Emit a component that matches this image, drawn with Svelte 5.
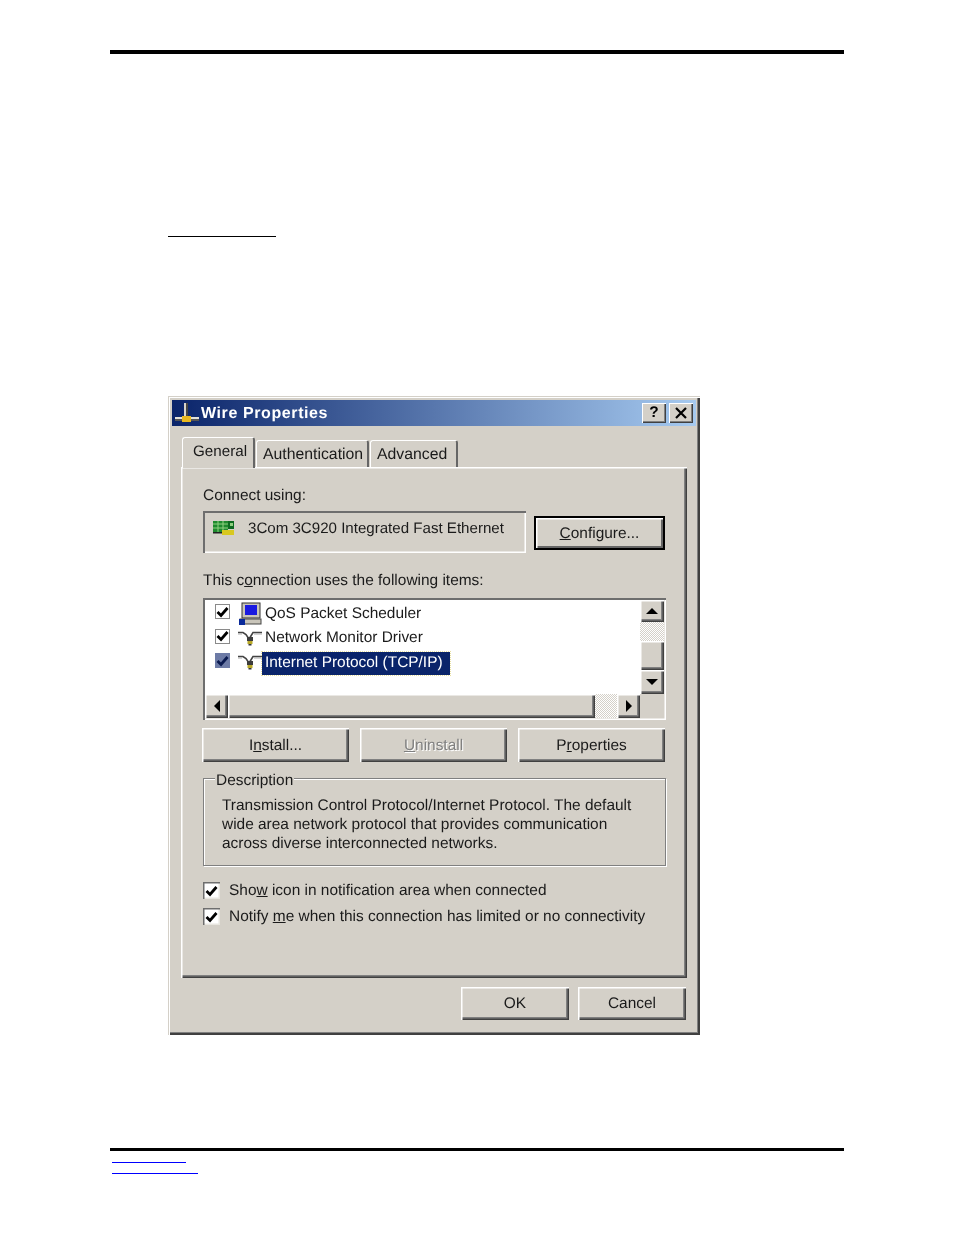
<script>
  const items = [
    { name: 'QoS Packet Scheduler', icon: 'pc' },
    { name: 'Network Monitor Driver', icon: 'net' },
    { name: 'Internet Protocol (TCP/IP)', icon: 'net', selected: true }
  ]
</script>

{#snippet netIcon()}
  <svg class="item-icon" width="24" height="20" viewBox="0 0 24 20">
    <path d="M0 3.5h5l3 2 2 3M24 3.5h-9l-3 5" fill="none" stroke="#444" stroke-width="1.6" />
    <path d="M0 5h4M16 5h8" stroke="#aaa" stroke-width="1" />
    <rect x="9" y="8" width="6" height="4" fill="#3c3c3c" />
    <rect x="9.5" y="12" width="5" height="3" fill="#b8a828" />
    <rect x="10.5" y="15" width="3" height="1.5" fill="#333" />
  </svg>
{/snippet}

{#snippet tick(color)}
  <svg width="13" height="12" viewBox="0 0 13 12"><path d="M1.5 6l3.5 3.5 6.5-7.5" fill="none" stroke={color} stroke-width="2.8" /></svg>
{/snippet}

<div class="page">
  <div class="rule top"></div>
  <div class="short-line"></div>

  <div class="dialog">
    <div class="title">
      <svg width="26" height="22" viewBox="0 0 26 22">
        <rect x="10" y="1" width="2" height="15" fill="#d8d4ca" />
        <rect x="12" y="1" width="2" height="15" fill="#444" />
        <rect x="1" y="15" width="24" height="2" fill="#e4e2da" />
        <rect x="1" y="17" width="24" height="2" fill="#555" />
        <rect x="8" y="14" width="9" height="6" fill="#e8b820" />
      </svg>
      <span class="title-text">Wire Properties</span>
      <span class="caption-btns">
        <span class="caption-btn help">?</span>
        <span class="caption-btn">
          <svg width="14" height="12" viewBox="0 0 14 12"><path d="M2 1l10 10M12 1L2 11" stroke="#000" stroke-width="2.2" /></svg>
        </span>
      </span>
    </div>

    <div class="tabs">
      <div class="tab active">General</div>
      <div class="tab auth">Authentication</div>
      <div class="tab adv">Advanced</div>
    </div>

    <div class="panel">
      <div class="label">Connect using:</div>
      <div class="connect-row">
        <div class="adapter">
          <svg width="24" height="17" viewBox="0 0 24 17">
            <rect x="1" y="1" width="15" height="11" fill="#1f8a2e" />
            <path d="M1 4h15M1 8h15M6 1v11M11 1v11" stroke="#8fd080" stroke-width="1" />
            <rect x="16" y="1" width="6" height="8" fill="#0c6a20" />
            <rect x="18" y="3" width="3" height="3" fill="#8fd080" />
            <rect x="10" y="10" width="12" height="5" fill="#d8c820" />
            <rect x="1" y="12" width="9" height="1.5" fill="#222" />
          </svg>
          <span>3Com 3C920 Integrated Fast Ethernet</span>
        </div>
        <div class="btn default"><span><u>C</u>onfigure...</span></div>
      </div>

      <div class="label second">This c<u>o</u>nnection uses the following items:</div>
      <div class="listbox">
        <div class="list-top">
          <div class="rows">
            {#each items as item}
              <div class="row">
                <span class="check" class:dim={item.selected}>
                  {@render tick(item.selected ? '#0a1a50' : '#000')}
                </span>
                {#if item.icon === 'pc'}
                  <svg class="item-icon" width="24" height="24" viewBox="0 0 24 24">
                    <rect x="4" y="1" width="18" height="15" fill="#c9c5ba" stroke="#333" />
                    <rect x="7" y="3" width="12" height="10" fill="#1a1ae0" />
                    <rect x="2" y="17" width="21" height="5" fill="#c9c5ba" stroke="#444" />
                    <rect x="1" y="17" width="6" height="6" fill="#0a2a9a" />
                  </svg>
                {:else}
                  {@render netIcon()}
                {/if}
                <span class="item-name" class:selected={item.selected}>{item.name}</span>
              </div>
            {/each}
          </div>
          <div class="vscroll">
            <div class="sb-btn up"><i class="arrow a-up"></i></div>
            <div class="pattern v"></div>
            <div class="sb-btn thumb-v"></div>
            <div class="sb-btn down"><i class="arrow a-down"></i></div>
          </div>
        </div>
        <div class="hscroll">
          <div class="sb-btn left"><i class="arrow a-left"></i></div>
          <div class="sb-btn thumb-h"></div>
          <div class="pattern h"></div>
          <div class="sb-btn right"><i class="arrow a-right"></i></div>
          <div class="corner"></div>
        </div>
      </div>

      <div class="action-row">
        <div class="btn action">I<u>n</u>stall...</div>
        <div class="btn action disabled"><u>U</u>ninstall</div>
        <div class="btn action">P<u>r</u>operties</div>
      </div>

      <div class="group">
        <span class="legend">Description</span>
        <p>Transmission Control Protocol/Internet Protocol. The default<br />wide area network protocol that provides communication<br />across diverse interconnected networks.</p>
      </div>

      <div class="opt first">
        <span class="check box">{@render tick('#000')}</span>
        <span>Sho<u>w</u> icon in notification area when connected</span>
      </div>
      <div class="opt">
        <span class="check box">{@render tick('#000')}</span>
        <span>Notify <u>m</u>e when this connection has limited or no connectivity</span>
      </div>
    </div>

    <div class="footer">
      <div class="btn foot">OK</div>
      <div class="btn foot">Cancel</div>
    </div>
  </div>

  <div class="rule bottom"></div>
  <div class="blue one"></div>
  <div class="blue two"></div>
</div>

<style>
  :global(body) {
    background: #fff;
  }

  .page {
    width: 954px;
    height: 1235px;
    box-sizing: border-box;
    padding: 50px 110px 0;
    overflow: hidden;
  }

  .rule {
    height: 4px;
    background: #000;
  }

  .rule.bottom {
    height: 3px;
    margin-top: 113px;
  }

  .short-line {
    width: 108px;
    height: 1px;
    background: #000;
    margin: 182px 0 0 58px;
  }

  .blue {
    height: 1px;
    background: #0000ff;
    margin-left: 2px;
  }

  .blue.one {
    width: 74px;
    margin-top: 11px;
  }

  .blue.two {
    width: 86px;
    margin-top: 10px;
  }

  .dialog {
    width: 532px;
    height: 639px;
    box-sizing: border-box;
    margin: 159px 0 0 58px;
    padding: 4px 4px 0;
    background: #d4d0c8;
    box-shadow: inset 1px 1px 0 #d4d0c8, inset 2px 2px 0 #fff, inset -2px -2px 0 #404040, inset -3px -3px 0 #808080;
    font: 15.45px "Liberation Sans", Arial, sans-serif;
    text-rendering: geometricPrecision;
    color: #1a1a1a;
    filter: blur(0.4px);
  }

  .title {
    height: 26px;
    display: flex;
    align-items: center;
    padding: 0 3px 0 2px;
    background: linear-gradient(90deg, #0a246a, #a6caf0);
    color: #fff;
  }

  .title-text {
    font-weight: bold;
    font-size: 16px;
    margin: 1px 0 0 1px;
    letter-spacing: 0.6px;
  }

  .caption-btns {
    margin-left: auto;
    display: flex;
    gap: 3px;
  }

  .caption-btn {
    width: 24px;
    height: 20px;
    display: flex;
    align-items: center;
    justify-content: center;
    background: #d4d0c8;
    color: #000;
    font-weight: bold;
    box-shadow: inset 1px 1px 0 #fff, inset -1px -1px 0 #404040, inset -2px -2px 0 #808080;
  }

  .tabs {
    display: flex;
    align-items: flex-end;
    height: 41px;
    padding-left: 10px;
    position: relative;
    z-index: 1;
  }

  .tab {
    height: 27px;
    box-sizing: border-box;
    padding: 5px 7px 0 6px;
    white-space: nowrap;
    font-size: 15.8px;
    border-top: 1.5px solid #fff;
    border-left: 1.5px solid #fff;
    border-right: 2px solid #666;
    border-radius: 3px 3px 0 0;
  }

  .tab.active {
    height: 31px;
    margin-bottom: -1px;
    padding: 5px 6px 0 10px;
    width: 73px;
    font-size: 15.2px;
    background: #d4d0c8;
  }

  .tab.auth {
    width: 113px;
    margin-left: 1px;
  }

  .tab.adv {
    width: 88px;
    margin-left: 1px;
  }

  .panel {
    height: 511px;
    box-sizing: border-box;
    margin: 0 9px 0 9px;
    padding: 19px 21px 0 22px;
    box-shadow: inset 1.5px 1.5px 0 #fff, inset -1.5px -1.5px 0 #404040, inset -3px -3px 0 #808080;
  }

  .label {
    line-height: 20px;
  }

  .label.second {
    margin-top: 18px;
  }

  .connect-row {
    display: flex;
    align-items: center;
    margin-top: 5px;
    height: 42px;
  }

  .adapter {
    width: 323px;
    height: 42px;
    box-sizing: border-box;
    display: flex;
    align-items: center;
    gap: 12px;
    padding: 0 0 8px 9px;
    white-space: nowrap;
    font-size: 15.1px;
    box-shadow: inset 2px 2px 0 #6e6e6e, inset -1.5px -1.5px 0 #fff;
  }

  .btn {
    box-sizing: border-box;
    display: flex;
    align-items: center;
    justify-content: center;
    padding-top: 1px;
    background: #d4d0c8;
    box-shadow: inset 1.5px 1.5px 0 #fff, inset -1.5px -1.5px 0 #404040, inset -3px -3px 0 #808080;
  }

  .btn.default {
    width: 131px;
    height: 34px;
    margin: 2px 0 0 8px;
    border: 2px solid #000;
    box-shadow: inset 1.5px 1.5px 0 #fff, inset -2px -2px 0 #666;
  }

  .listbox {
    margin-top: 7px;
    height: 122px;
    width: 463px;
    box-sizing: border-box;
    display: flex;
    flex-direction: column;
    padding: 2px 2px 2px 2px;
    box-shadow: inset 2px 2px 0 #6e6e6e, inset -1.5px -1.5px 0 #fff;
  }

  .list-top {
    display: flex;
    height: 94px;
  }

  .rows {
    flex: 1;
    background: #fff;
    padding-top: 2px;
  }

  .row {
    display: flex;
    align-items: center;
    height: 24.5px;
    padding-left: 10px;
  }

  .check {
    width: 15px;
    height: 15px;
    box-sizing: border-box;
    display: flex;
    align-items: center;
    justify-content: center;
    border: 1.5px solid #8a8a8a;
    background: #fff;
    flex: none;
    margin-top: -5px;
  }

  .check.dim {
    background: #6d7ba6;
    border-color: #6d7ba6;
  }

  .item-icon {
    margin-left: 8px;
    flex: none;
  }

  .item-name {
    white-space: nowrap;
    margin-left: 1px;
    height: 23px;
    line-height: 22px;
    padding: 0 6px 0 2px;
    box-sizing: border-box;
  }

  .item-name.selected {
    margin-left: 0;
    padding: 0 7px 0 3px;
    background: #0a246a;
    color: #fff;
    outline: 1px dotted #e8e0a0;
  }

  .vscroll {
    width: 24px;
    display: flex;
    flex-direction: column;
    flex: none;
  }

  .sb-btn {
    background: #d4d0c8;
    display: flex;
    align-items: center;
    justify-content: center;
    flex: none;
    box-shadow: inset 1.5px 1.5px 0 #fff, inset -1.5px -1.5px 0 #404040, inset -3px -3px 0 #808080;
  }

  .sb-btn.up {
    height: 22px;
  }

  .pattern {
    background: repeating-conic-gradient(#d4d0c8 0 25%, #fff 0 50%) 0 0 / 2px 2px;
  }

  .pattern.v {
    height: 19px;
  }

  .sb-btn.thumb-v {
    height: 29px;
  }

  .sb-btn.down {
    height: 24px;
  }

  .hscroll {
    display: flex;
    height: 24px;
  }

  .sb-btn.left,
  .sb-btn.right {
    width: 23px;
  }

  .sb-btn.thumb-h {
    width: 367px;
  }

  .pattern.h {
    width: 22px;
  }

  .corner {
    width: 24px;
  }

  .arrow {
    width: 0;
    height: 0;
    border-style: solid;
    border-color: transparent;
    display: block;
  }

  .a-up {
    border-width: 0 6px 6px;
    border-bottom-color: #000;
  }

  .a-down {
    border-width: 6px 6px 0;
    border-top-color: #000;
  }

  .a-left {
    border-width: 6px 6px 6px 0;
    border-right-color: #000;
  }

  .a-right {
    border-width: 6px 0 6px 6px;
    border-left-color: #000;
  }

  .action-row {
    display: flex;
    margin: 8px 0 0 -1px;
    gap: 11px;
    width: 464px;
  }

  .btn.action {
    width: 147px;
    height: 34px;
  }

  .btn.disabled {
    color: #808080;
    text-shadow: 1px 1px 0 #fff;
  }

  .group {
    position: relative;
    margin-top: 16px;
    width: 463px;
    height: 88px;
    box-sizing: border-box;
    border: 1.5px solid #808080;
    box-shadow: 1px 1px 0 #fff, inset 1px 1px 0 #fff;
    padding: 17px 0 0 18px;
  }

  .group p {
    margin: 0;
    line-height: 19px;
    white-space: nowrap;
  }

  .legend {
    position: absolute;
    top: -8px;
    left: 11px;
    padding: 0 1px;
    background: #d4d0c8;
    line-height: 20px;
  }

  .opt {
    display: flex;
    align-items: center;
    gap: 9px;
    height: 17px;
    margin-top: 9px;
    white-space: nowrap;
  }

  .opt.first {
    margin-top: 16px;
  }

  .check.box {
    width: 17px;
    height: 17px;
    border: none;
    margin-top: 0;
    box-shadow: inset 1.5px 1.5px 0 #6e6e6e, inset -1.5px -1.5px 0 #e8e6e0;
  }

  .footer {
    display: flex;
    justify-content: flex-end;
    gap: 9px;
    margin: 9px 10px 0 0;
  }

  .btn.foot {
    width: 108px;
    height: 33px;
  }
</style>
